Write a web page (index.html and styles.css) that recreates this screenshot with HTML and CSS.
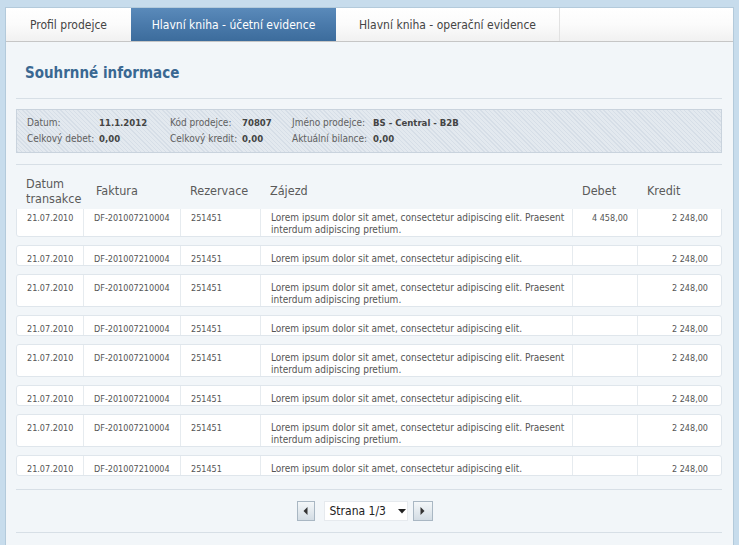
FILE: index.html
```html
<!DOCTYPE html>
<html lang="cs">
<head>
<meta charset="utf-8">
<title>Hlavní kniha - účetní evidence</title>
<link rel="stylesheet" href="styles.css">
</head>
<body>
<div class="panel">
  <div class="tabs">
    <div class="tab tab-1">Profil prodejce</div>
    <div class="tab tab-2 active">Hlavní kniha - účetní evidence</div>
    <div class="tab tab-3">Hlavní kniha - operační evidence</div>
    <div class="tab-fill"></div>
  </div>
  <div class="content">
    <h1 class="title">Souhrnné informace</h1>
    <div class="rule"></div>
    <div class="info">
      <span class="lbl">Datum:</span><span class="val">11.1.2012</span>
      <span class="lbl">Kód prodejce:</span><span class="val">70807</span>
      <span class="lbl">Jméno prodejce:</span><span class="val">BS - Central - B2B</span>
      <span class="lbl">Celkový debet:</span><span class="val">0,00</span>
      <span class="lbl">Celkový kredit:</span><span class="val">0,00</span>
      <span class="lbl">Aktuální bilance:</span><span class="val">0,00</span>
    </div>
    <div class="rule rule-2"></div>
    <div class="thead">
      <div class="th">Datum<br>transakce</div>
      <div class="th th-faktura">Faktura</div>
      <div class="th">Rezervace</div>
      <div class="th">Zájezd</div>
      <div class="th">Debet</div>
      <div class="th">Kredit</div>
    </div>
    <div class="rows">
      <div class="row first">
        <div class="td">21.07.2010</div><div class="td">DF-201007210004</div><div class="td">251451</div>
        <div class="td td-text">Lorem ipsum dolor sit amet, consectetur adipiscing elit. Praesent<br>interdum adipiscing pretium.</div>
        <div class="td num">4 458,00</div><div class="td num">2 248,00</div>
      </div>
      <div class="row">
        <div class="td">21.07.2010</div><div class="td">DF-201007210004</div><div class="td">251451</div>
        <div class="td td-text">Lorem ipsum dolor sit amet, consectetur adipiscing elit.</div>
        <div class="td num"></div><div class="td num">2 248,00</div>
      </div>
      <div class="row">
        <div class="td">21.07.2010</div><div class="td">DF-201007210004</div><div class="td">251451</div>
        <div class="td td-text">Lorem ipsum dolor sit amet, consectetur adipiscing elit. Praesent<br>interdum adipiscing pretium.</div>
        <div class="td num"></div><div class="td num">2 248,00</div>
      </div>
      <div class="row">
        <div class="td">21.07.2010</div><div class="td">DF-201007210004</div><div class="td">251451</div>
        <div class="td td-text">Lorem ipsum dolor sit amet, consectetur adipiscing elit.</div>
        <div class="td num"></div><div class="td num">2 248,00</div>
      </div>
      <div class="row">
        <div class="td">21.07.2010</div><div class="td">DF-201007210004</div><div class="td">251451</div>
        <div class="td td-text">Lorem ipsum dolor sit amet, consectetur adipiscing elit. Praesent<br>interdum adipiscing pretium.</div>
        <div class="td num"></div><div class="td num">2 248,00</div>
      </div>
      <div class="row">
        <div class="td">21.07.2010</div><div class="td">DF-201007210004</div><div class="td">251451</div>
        <div class="td td-text">Lorem ipsum dolor sit amet, consectetur adipiscing elit.</div>
        <div class="td num"></div><div class="td num">2 248,00</div>
      </div>
      <div class="row">
        <div class="td">21.07.2010</div><div class="td">DF-201007210004</div><div class="td">251451</div>
        <div class="td td-text">Lorem ipsum dolor sit amet, consectetur adipiscing elit. Praesent<br>interdum adipiscing pretium.</div>
        <div class="td num"></div><div class="td num">2 248,00</div>
      </div>
      <div class="row">
        <div class="td">21.07.2010</div><div class="td">DF-201007210004</div><div class="td">251451</div>
        <div class="td td-text">Lorem ipsum dolor sit amet, consectetur adipiscing elit.</div>
        <div class="td num"></div><div class="td num">2 248,00</div>
      </div>
    </div>
    <div class="rule rule-3"></div>
    <div class="pager">
      <div class="pbtn pbtn-prev"><svg width="5" height="8" viewBox="0 0 5 8"><path d="M4.5 0 L0.5 4 L4.5 8 Z" fill="#333"/></svg></div>
      <div class="pselect">Strana 1/3<svg class="caret" width="8" height="5" viewBox="0 0 8 5"><path d="M0 0 H8 L4 4.5 Z" fill="#222"/></svg></div>
      <div class="pbtn pbtn-next"><svg width="5" height="8" viewBox="0 0 5 8"><path d="M0.5 0 L4.5 4 L0.5 8 Z" fill="#333"/></svg></div>
    </div>
    <div class="rule rule-4"></div>
  </div>
</div>
</body>
</html>
```

FILE: styles.css
```css
html, body {
  margin: 0;
  padding: 0;
}
body {
  background: #c7dcec;
  padding: 7px 5px 0 5px;
  height: 545px;
  box-sizing: border-box;
  overflow: hidden;
  display: flex;
  flex-direction: column;
  font-family: "DejaVu Sans Condensed", "DejaVu Sans", sans-serif;
  font-stretch: condensed;
  color: #555;
}
.panel {
  flex: 1;
  min-height: 0;
  overflow: hidden;
  background: #f2f6f9;
  border: 1px solid #b3cadb;
  border-bottom: none;
}
.tabs {
  display: flex;
  height: 33px;
  border-bottom: 1px solid #c6c6c6;
  background: linear-gradient(#ffffff 0%, #fbfbfb 50%, #f1f1f1 100%);
}
.tab {
  display: flex;
  align-items: center;
  justify-content: center;
  font-size: 12px;
  color: #444;
}
.tab-1 { width: 125px; }
.tab-2 { width: 205px; }
.tab-3 { width: 223px; border-right: 1px solid #e2e2e2; }
.tab-fill { flex: 1; }
.tab.active {
  background: linear-gradient(#5a8aba 0%, #4a7aab 50%, #3c6c9c 100%);
  color: #fff;
}
.content {
  padding: 0 11px 0 10px;
}
.title {
  margin: 21px 0 0 0;
  padding-left: 9px;
  font-size: 15px;
  line-height: 20px;
  font-weight: bold;
  color: #3a6892;
}
.rule {
  height: 1px;
  background: #d7dfe6;
  margin-top: 15px;
}
.info {
  margin-top: 10px;
  height: 34px;
  padding: 4px 0 4px 10px;
  border: 1px solid #c9d3dd;
  background-color: #e3e9ef;
  background-image: repeating-linear-gradient(45deg, #d6dee7 0px, #d6dee7 1px, transparent 1px, transparent 3px);
  display: grid;
  grid-template-columns: 72px 71px 72px 50px 81px 1fr;
  grid-auto-rows: 16px;
  align-items: center;
  font-size: 10px;
}
.lbl { color: #606060; }
.val { color: #444; font-weight: bold; font-size: 9.5px; }
.rule-2 { margin-top: 11px; }
.thead {
  margin-top: 10px;
  height: 31px;
  display: grid;
  grid-template-columns: 67px 97px 80px 312px 65px 85px;
  align-items: center;
  font-size: 12.5px;
  line-height: 15px;
  color: #5a5a5a;
}
.th { padding-left: 10px; }
.th-faktura { padding-left: 13px; }
.rows {
  margin-top: 3px;
  overflow: hidden;
  display: flex;
  flex-direction: column;
  gap: 8px;
}
.row {
  display: grid;
  grid-template-columns: 66px 97px 80px 312px 65px 84px;
  background: #fff;
  border: 1px solid #dfe6ec;
  border-radius: 3px;
  font-size: 9px;
  line-height: 12px;
  color: #555;
}
.row.first { margin-top: -5px; }
.td {
  padding: 7px 9px 0 10px;
  border-left: 1px solid #e6ebef;
  white-space: nowrap;
}
.td:first-child { border-left: none; }
.td.num { text-align: right; }
.td:last-child { padding-right: 13px; }
.td-text { font-size: 10px; }
.rule-3 { margin-top: 13px; }
.pager {
  margin-top: 11px;
  height: 20px;
  display: flex;
  justify-content: center;
  padding-right: 9px;
}
.pbtn {
  width: 16px;
  height: 18px;
  border: 1px solid #a9b7c3;
  background: linear-gradient(#f4f7f9, #d3dce4);
  display: flex;
  align-items: center;
  justify-content: center;
}
.pbtn-next { width: 18px; margin-left: 5px; }
.pselect {
  margin-left: 9px;
  height: 20px;
  padding-left: 5px;
  background: #fff;
  border: 1px solid #e6eaee;
  box-sizing: border-box;
  width: 84px;
  display: flex;
  align-items: center;
  font-size: 12px;
  color: #222;
  gap: 12px;
}
.caret { margin-top: 1px; }
.rule-4 { margin-top: 11px; }
```
